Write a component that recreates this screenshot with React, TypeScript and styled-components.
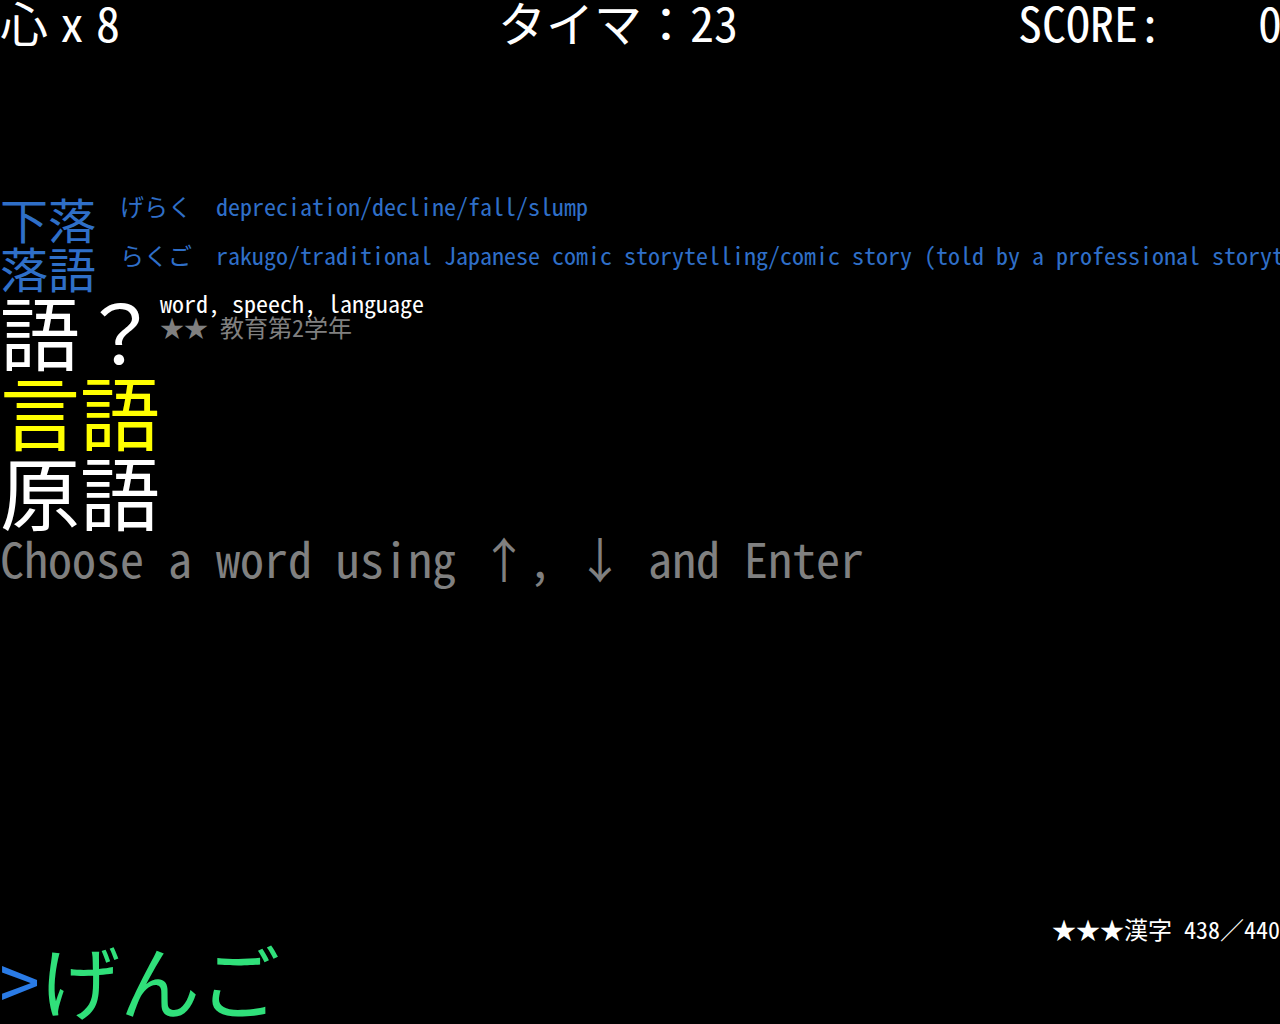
import React from "react";
import styled, { createGlobalStyle } from "styled-components";

const Global = createGlobalStyle`
  html, body { margin: 0; padding: 0; background: #000; }
  body { font-family: "Noto Sans Mono CJK JP", "Noto Sans CJK JP", "DejaVu Sans Mono", monospace; }
`;

const Screen = styled.div`
  width: 1280px;
  height: 1024px;
  background: #000;
  color: #fff;
  display: flex;
  flex-direction: column;
  overflow: hidden;
  font-family: "Noto Sans Mono CJK JP", "Noto Sans CJK JP", monospace;
`;

const TopBar = styled.div`
  display: grid;
  grid-template-columns: 498px 520px 262px;
  height: 48px;
  font-size: 48px;
  line-height: 42px;
  white-space: pre;
`;

const TopCell = styled.div`
  white-space: pre;
`;

const Times = styled.span`
  margin-left: 12px;
  margin-right: -12px;
`;

const History = styled.div`
  margin-top: 146px;
  display: flex;
  flex-direction: column;
`;

const HistRow = styled.div`
  display: flex;
  align-items: flex-start;
  height: 49px;
  color: #2f6fc8;
  white-space: pre;
`;

const HistWord = styled.span`
  font-size: 48px;
  line-height: 48px;
  width: 120px;
  flex: none;
`;

const Reading = styled.span`
  font-size: 24px;
  line-height: 24px;
  width: 96px;
  flex: none;
`;

const Gloss = styled.span`
  font-size: 24px;
  line-height: 24px;
`;

const Question = styled.div`
  display: flex;
  align-items: flex-start;
  height: 80px;
  margin-top: -3px;
`;

const BigWord = styled.div<{ $color: string }>`
  font-size: 80px;
  line-height: 80px;
  height: 80px;
  color: ${(p) => p.$color};
  white-space: pre;
`;

const Info = styled.div`
  display: flex;
  flex-direction: column;
  font-size: 24px;
  line-height: 24px;
  padding-top: 2px;
`;

const Meaning = styled.div`
  color: #fff;
  white-space: pre;
`;

const Level = styled.div`
  color: #808080;
  white-space: pre;
`;

const Hint = styled.div`
  font-size: 48px;
  line-height: 48px;
  color: #808080;
  white-space: pre;
  margin-top: 4px;
`;

const Bottom = styled.div`
  margin-top: auto;
  display: flex;
  flex-direction: column;
`;

const Stats = styled.div`
  align-self: flex-end;
  font-size: 24px;
  line-height: 24px;
  color: #fff;
  white-space: pre;
  margin-bottom: -3px;
`;

const Prompt = styled.div`
  font-size: 80px;
  line-height: 80px;
  height: 80px;
  white-space: pre;
  color: #30e07a;
  margin-bottom: 6px;
`;

const Caret = styled.span`
  color: #2a7be6;
`;

export default function App() {
  return (
    <>
      <Global />
      <Screen>
        <TopBar>
          <TopCell>
            心<Times>x</Times> 8
          </TopCell>
          <TopCell>タイマ：23</TopCell>
          <TopCell>SCORE:    0</TopCell>
        </TopBar>
        <History>
          <HistRow>
            <HistWord>下落</HistWord>
            <Reading>げらく</Reading>
            <Gloss>depreciation/decline/fall/slump</Gloss>
          </HistRow>
          <HistRow>
            <HistWord>落語</HistWord>
            <Reading>らくご</Reading>
            <Gloss>rakugo/traditional Japanese comic storytelling/comic story (told by a professional storyteller)</Gloss>
          </HistRow>
        </History>
        <Question>
          <BigWord $color="#fff">語？</BigWord>
          <Info>
            <Meaning>word, speech, language</Meaning>
            <Level>★★ 教育第2学年</Level>
          </Info>
        </Question>
        <BigWord $color="#ffff00">言語</BigWord>
        <BigWord $color="#fff">原語</BigWord>
        <Hint>Choose a word using ↑, ↓ and Enter</Hint>
        <Bottom>
          <Stats>★★★漢字 438／440</Stats>
          <Prompt>
            <Caret>&gt;</Caret>げんご
          </Prompt>
        </Bottom>
      </Screen>
    </>
  );
}
